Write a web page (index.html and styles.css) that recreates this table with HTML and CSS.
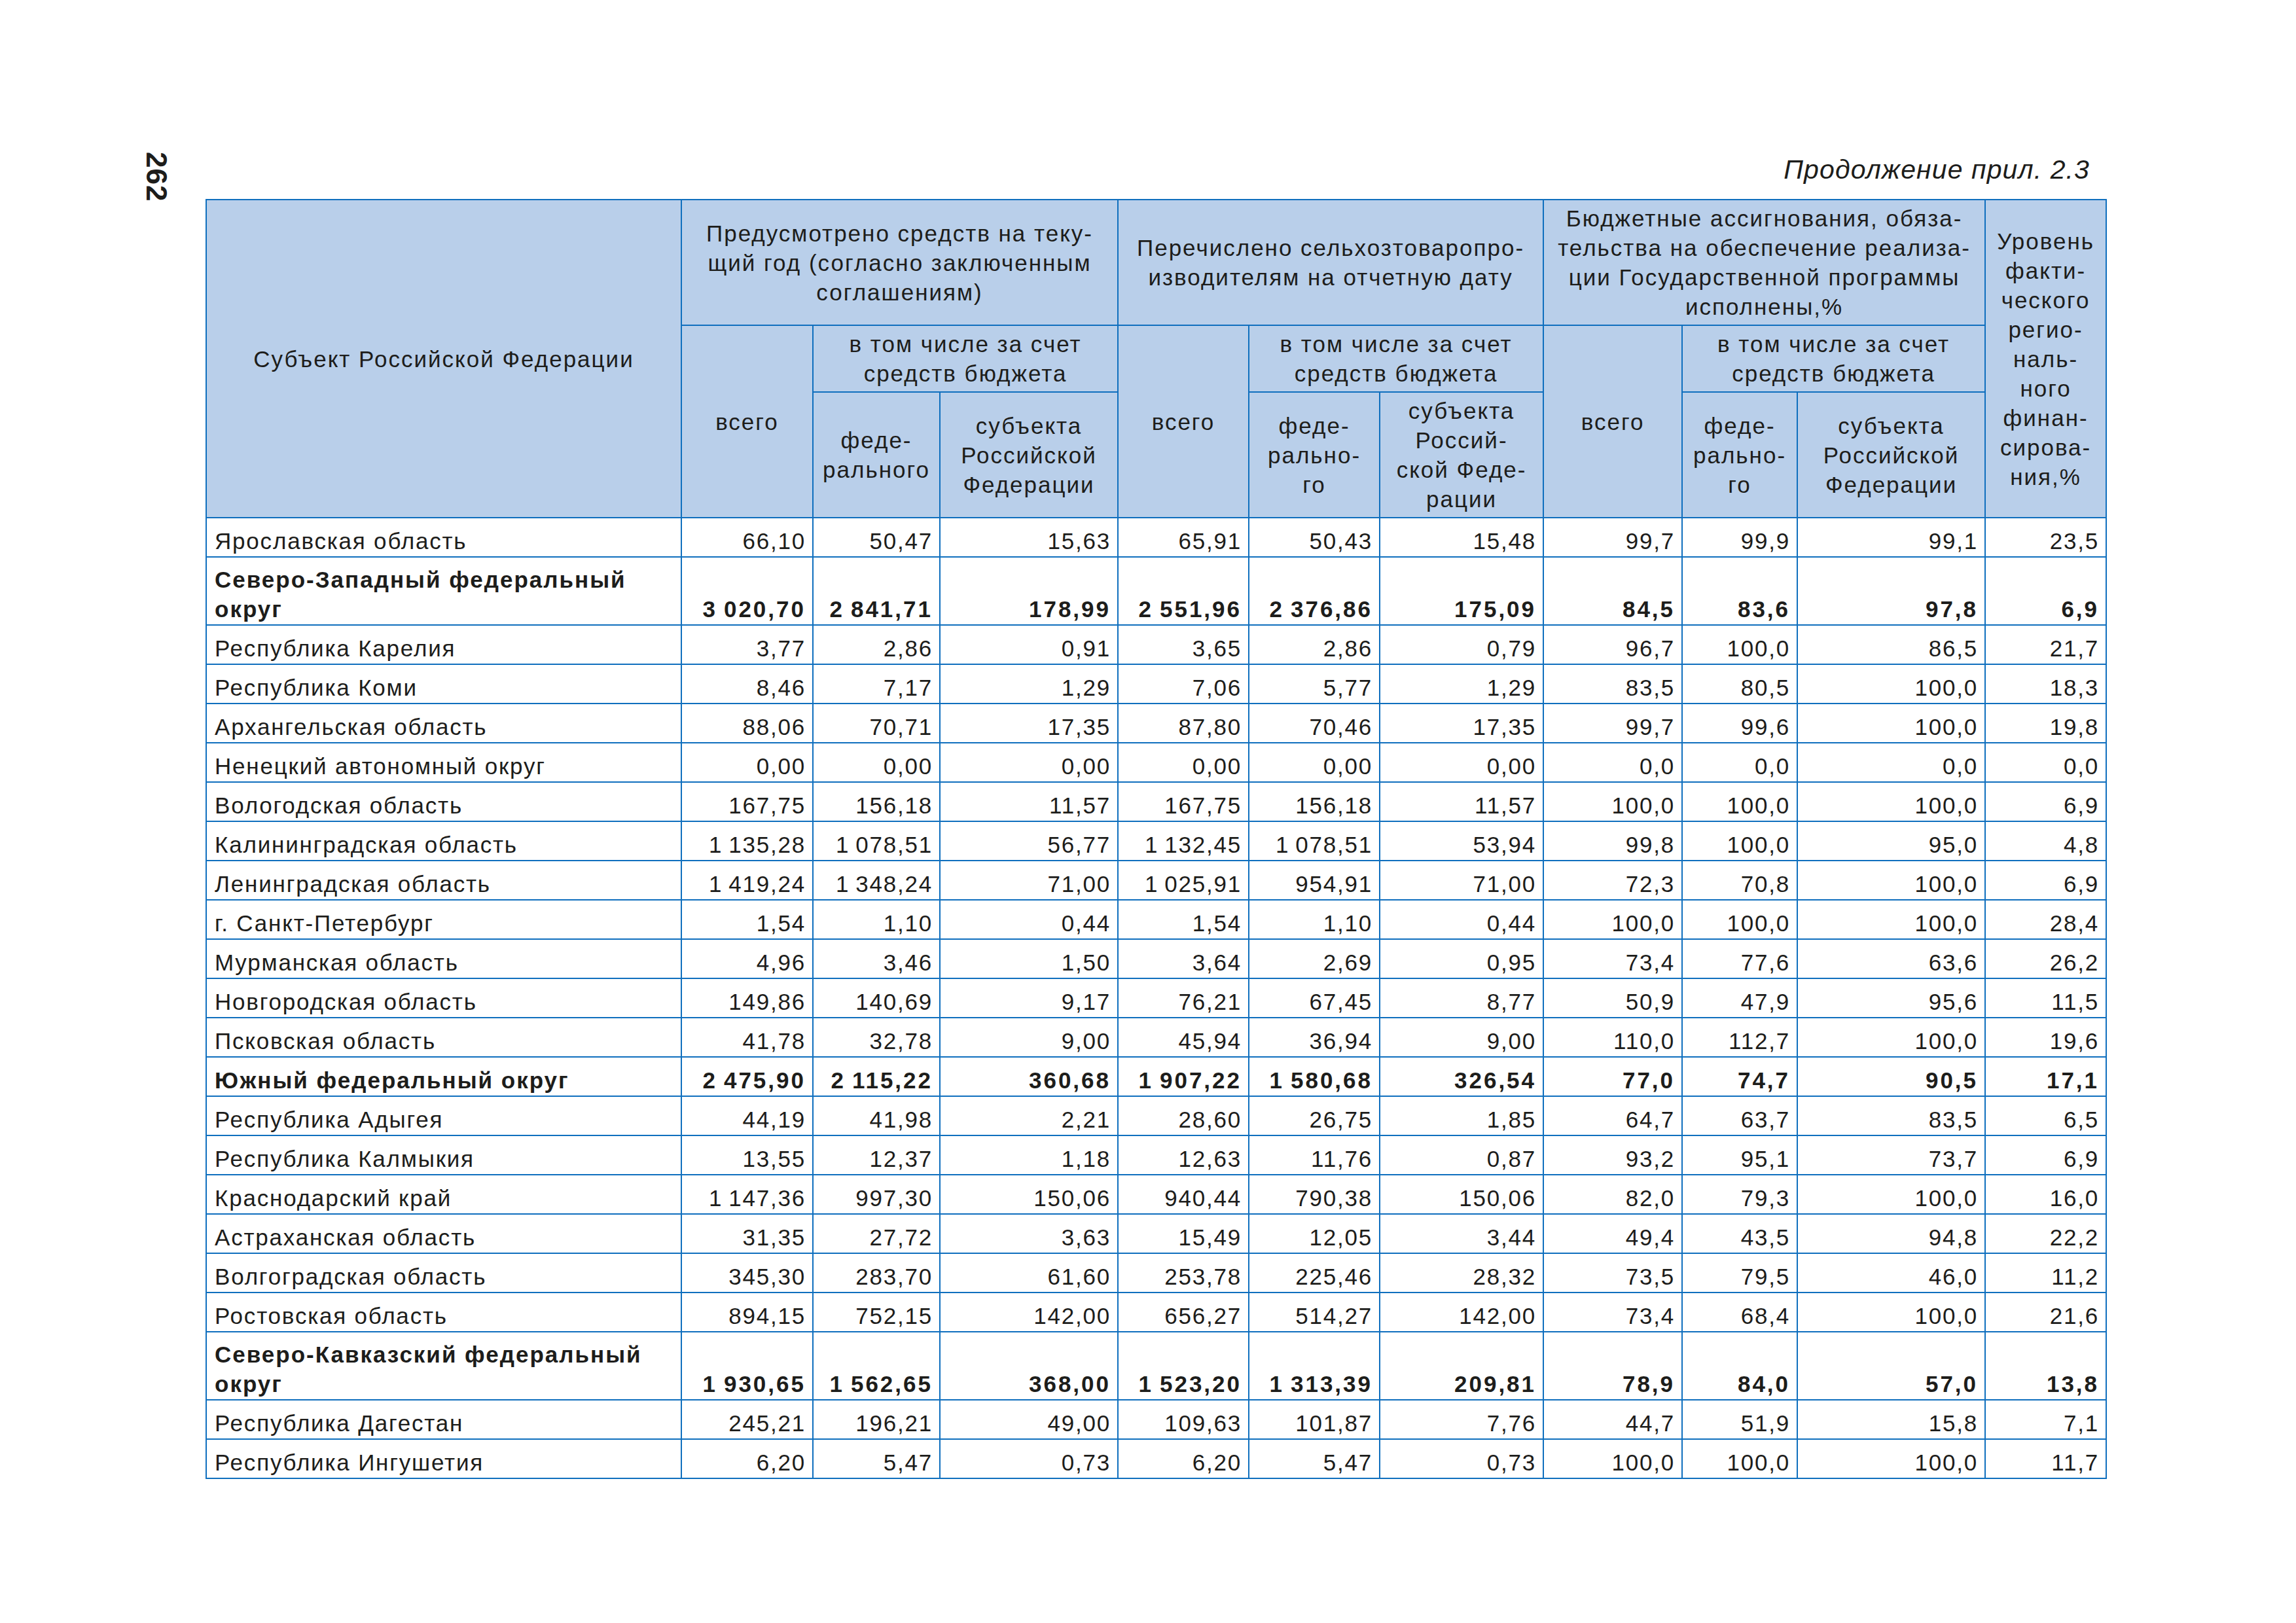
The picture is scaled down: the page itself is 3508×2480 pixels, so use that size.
FILE: index.html
```html
<!DOCTYPE html>
<html lang="ru">
<head>
<meta charset="utf-8">
<title>Продолжение прил. 2.3</title>
<link rel="stylesheet" href="styles.css">
</head>
<body>
<div class="page">
  <div class="folio">262</div>
  <div class="content">
    <div class="caption">Продолжение прил. 2.3</div>
    <table class="grid">
      <colgroup>
        <col class="c-name">
        <col class="c1"><col class="c2"><col class="c3">
        <col class="c4"><col class="c5"><col class="c6">
        <col class="c7"><col class="c8"><col class="c9">
        <col class="c10">
      </colgroup>
      <thead>
        <tr class="h1">
          <th rowspan="3">Субъект Российской Федерации</th>
          <th colspan="3">Предусмотрено средств на теку-<br>щий год (согласно заключенным<br>соглашениям)</th>
          <th colspan="3">Перечислено сельхозтоваропро-<br>изводителям на отчетную дату</th>
          <th colspan="3">Бюджетные ассигнования, обяза-<br>тельства на обеспечение реализа-<br>ции Государственной программы<br>исполнены,%</th>
          <th rowspan="3">Уровень<br>факти-<br>ческого<br>регио-<br>наль-<br>ного<br>финан-<br>сирова-<br>ния,%</th>
        </tr>
        <tr class="h2">
          <th rowspan="2">всего</th>
          <th colspan="2">в том числе за счет<br>средств бюджета</th>
          <th rowspan="2">всего</th>
          <th colspan="2">в том числе за счет<br>средств бюджета</th>
          <th rowspan="2">всего</th>
          <th colspan="2">в том числе за счет<br>средств бюджета</th>
        </tr>
        <tr class="h3">
          <th>феде-<br>рального</th>
          <th>субъекта<br>Российской<br>Федерации</th>
          <th>феде-<br>рально-<br>го</th>
          <th>субъекта<br>Россий-<br>ской Феде-<br>рации</th>
          <th>феде-<br>рально-<br>го</th>
          <th>субъекта<br>Российской<br>Федерации</th>
        </tr>
      </thead>
      <tbody>
        <tr><td>Ярославская область</td><td>66,10</td><td>50,47</td><td>15,63</td><td>65,91</td><td>50,43</td><td>15,48</td><td>99,7</td><td>99,9</td><td>99,1</td><td>23,5</td></tr>
        <tr class="total"><td>Северо-Западный федеральный<br>округ</td><td>3&#8201;020,70</td><td>2&#8201;841,71</td><td>178,99</td><td>2&#8201;551,96</td><td>2&#8201;376,86</td><td>175,09</td><td>84,5</td><td>83,6</td><td>97,8</td><td>6,9</td></tr>
        <tr><td>Республика Карелия</td><td>3,77</td><td>2,86</td><td>0,91</td><td>3,65</td><td>2,86</td><td>0,79</td><td>96,7</td><td>100,0</td><td>86,5</td><td>21,7</td></tr>
        <tr><td>Республика Коми</td><td>8,46</td><td>7,17</td><td>1,29</td><td>7,06</td><td>5,77</td><td>1,29</td><td>83,5</td><td>80,5</td><td>100,0</td><td>18,3</td></tr>
        <tr><td>Архангельская область</td><td>88,06</td><td>70,71</td><td>17,35</td><td>87,80</td><td>70,46</td><td>17,35</td><td>99,7</td><td>99,6</td><td>100,0</td><td>19,8</td></tr>
        <tr><td>Ненецкий автономный округ</td><td>0,00</td><td>0,00</td><td>0,00</td><td>0,00</td><td>0,00</td><td>0,00</td><td>0,0</td><td>0,0</td><td>0,0</td><td>0,0</td></tr>
        <tr><td>Вологодская область</td><td>167,75</td><td>156,18</td><td>11,57</td><td>167,75</td><td>156,18</td><td>11,57</td><td>100,0</td><td>100,0</td><td>100,0</td><td>6,9</td></tr>
        <tr><td>Калининградская область</td><td>1&#8201;135,28</td><td>1&#8201;078,51</td><td>56,77</td><td>1&#8201;132,45</td><td>1&#8201;078,51</td><td>53,94</td><td>99,8</td><td>100,0</td><td>95,0</td><td>4,8</td></tr>
        <tr><td>Ленинградская область</td><td>1&#8201;419,24</td><td>1&#8201;348,24</td><td>71,00</td><td>1&#8201;025,91</td><td>954,91</td><td>71,00</td><td>72,3</td><td>70,8</td><td>100,0</td><td>6,9</td></tr>
        <tr><td>г. Санкт-Петербург</td><td>1,54</td><td>1,10</td><td>0,44</td><td>1,54</td><td>1,10</td><td>0,44</td><td>100,0</td><td>100,0</td><td>100,0</td><td>28,4</td></tr>
        <tr><td>Мурманская область</td><td>4,96</td><td>3,46</td><td>1,50</td><td>3,64</td><td>2,69</td><td>0,95</td><td>73,4</td><td>77,6</td><td>63,6</td><td>26,2</td></tr>
        <tr><td>Новгородская область</td><td>149,86</td><td>140,69</td><td>9,17</td><td>76,21</td><td>67,45</td><td>8,77</td><td>50,9</td><td>47,9</td><td>95,6</td><td>11,5</td></tr>
        <tr><td>Псковская область</td><td>41,78</td><td>32,78</td><td>9,00</td><td>45,94</td><td>36,94</td><td>9,00</td><td>110,0</td><td>112,7</td><td>100,0</td><td>19,6</td></tr>
        <tr class="total"><td>Южный федеральный округ</td><td>2&#8201;475,90</td><td>2&#8201;115,22</td><td>360,68</td><td>1&#8201;907,22</td><td>1&#8201;580,68</td><td>326,54</td><td>77,0</td><td>74,7</td><td>90,5</td><td>17,1</td></tr>
        <tr><td>Республика Адыгея</td><td>44,19</td><td>41,98</td><td>2,21</td><td>28,60</td><td>26,75</td><td>1,85</td><td>64,7</td><td>63,7</td><td>83,5</td><td>6,5</td></tr>
        <tr><td>Республика Калмыкия</td><td>13,55</td><td>12,37</td><td>1,18</td><td>12,63</td><td>11,76</td><td>0,87</td><td>93,2</td><td>95,1</td><td>73,7</td><td>6,9</td></tr>
        <tr><td>Краснодарский край</td><td>1&#8201;147,36</td><td>997,30</td><td>150,06</td><td>940,44</td><td>790,38</td><td>150,06</td><td>82,0</td><td>79,3</td><td>100,0</td><td>16,0</td></tr>
        <tr><td>Астраханская область</td><td>31,35</td><td>27,72</td><td>3,63</td><td>15,49</td><td>12,05</td><td>3,44</td><td>49,4</td><td>43,5</td><td>94,8</td><td>22,2</td></tr>
        <tr><td>Волгоградская область</td><td>345,30</td><td>283,70</td><td>61,60</td><td>253,78</td><td>225,46</td><td>28,32</td><td>73,5</td><td>79,5</td><td>46,0</td><td>11,2</td></tr>
        <tr><td>Ростовская область</td><td>894,15</td><td>752,15</td><td>142,00</td><td>656,27</td><td>514,27</td><td>142,00</td><td>73,4</td><td>68,4</td><td>100,0</td><td>21,6</td></tr>
        <tr class="total"><td>Северо-Кавказский федеральный<br>округ</td><td>1&#8201;930,65</td><td>1&#8201;562,65</td><td>368,00</td><td>1&#8201;523,20</td><td>1&#8201;313,39</td><td>209,81</td><td>78,9</td><td>84,0</td><td>57,0</td><td>13,8</td></tr>
        <tr><td>Республика Дагестан</td><td>245,21</td><td>196,21</td><td>49,00</td><td>109,63</td><td>101,87</td><td>7,76</td><td>44,7</td><td>51,9</td><td>15,8</td><td>7,1</td></tr>
        <tr><td>Республика Ингушетия</td><td>6,20</td><td>5,47</td><td>0,73</td><td>6,20</td><td>5,47</td><td>0,73</td><td>100,0</td><td>100,0</td><td>100,0</td><td>11,7</td></tr>
      </tbody>
    </table>
  </div>
</div>
</body>
</html>
```
FILE: styles.css
```css
html, body {
  margin: 0;
  padding: 0;
  background: #ffffff;
}

body {
  font-family: "Liberation Sans", Arial, sans-serif;
  color: #1d1d1b;
}

.page {
  width: 3508px;
  height: 2480px;
  box-sizing: border-box;
  display: flex;
  align-items: flex-start;
  padding-top: 232px;
}

.folio {
  writing-mode: vertical-rl;
  font-weight: bold;
  font-size: 44px;
  line-height: 34px;
  width: 34px;
  margin-left: 222px;
  letter-spacing: 1px;
}

.content {
  margin-left: 58px;
  display: flex;
  flex-direction: column;
  width: 2905px;
}

.caption {
  text-align: right;
  font-style: italic;
  font-size: 41px;
  line-height: 50px;
  letter-spacing: 1.1px;
  padding-right: 26px;
  margin-bottom: 20px;
  margin-top: 2px;
}

.grid {
  border-collapse: collapse;
  table-layout: fixed;
  width: 2903px;
  font-size: 35px;
  line-height: 45px;
  letter-spacing: 1.8px;
}

.c-name { width: 726px; }
.c1 { width: 201px; }
.c2 { width: 194px; }
.c3 { width: 272px; }
.c4 { width: 200px; }
.c5 { width: 200px; }
.c6 { width: 250px; }
.c7 { width: 212px; }
.c8 { width: 176px; }
.c9 { width: 287px; }
.c10 { width: 185px; }

.grid th,
.grid td {
  border: 2px solid #0f6fbe;
}

.grid th {
  background: #b9cfea;
  font-weight: normal;
  text-align: center;
  vertical-align: middle;
  white-space: nowrap;
  padding: 0;
  letter-spacing: 2px;
}

.h1 { height: 192px; }
.h2 { height: 102px; }
.h3 { height: 192px; }

.grid td {
  padding: 12px 10px 1px 10px;
  vertical-align: bottom;
  text-align: right;
  white-space: nowrap;
}

.grid td:first-child {
  text-align: left;
  padding-left: 12px;
}

.total td {
  font-weight: bold;
  letter-spacing: 3px;
}

.total td:first-child {
  padding-top: 11px;
  letter-spacing: 2px;
}
```
